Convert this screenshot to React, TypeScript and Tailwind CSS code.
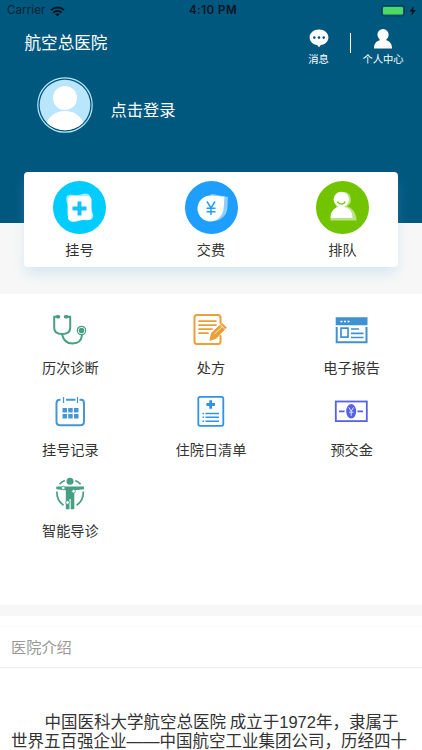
import type { ReactNode } from 'react';

type Item = { label: string; icon: ReactNode };

function StatusBar() {
  return (
    <div className="grid h-[22px] grid-cols-3 items-center pl-[7px] pr-[5px] font-['Inter','Liberation_Sans',sans-serif] text-[11.5px] leading-none text-[#04202f]">
      <div className="flex items-center gap-[5px]">
        <span className="tracking-[0.1px]">Carrier</span>
        <svg className="h-[11px] w-[15px]" viewBox="0 0 15 11" fill="none" stroke="#04151f" strokeWidth="2">
          <path d="M1 4.1a9.4 9.4 0 0 1 13 0" />
          <path d="M3.4 6.7a6 6 0 0 1 8.2 0" />
          <path d="M7.5 10.6 5.2 8.3a3.4 3.4 0 0 1 4.6 0z" fill="#04151f" stroke="none" />
        </svg>
      </div>
      <span className="pl-[2px] text-center font-semibold tracking-[0.5px] text-[#04151f]">4:10 PM</span>
      <div className="flex items-center justify-end">
        <svg className="h-[12px] w-[36px]" viewBox="0 0 36 12">
          <rect x="0.5" y="0.5" width="23" height="10.5" rx="2.5" fill="none" stroke="#063b55" />
          <rect x="2" y="2" width="20" height="7.5" rx="1" fill="#4cd964" />
          <path d="M25 4v3.6c1-.5 1-3.1 0-3.6z" fill="#063b55" />
          <path d="M32.8 1 28.6 6.5h2.6l-1 4.5 4.6-6h-2.7z" fill="#04151f" />
        </svg>
      </div>
    </div>
  );
}

function Header() {
  return (
    <header className="h-[222.5px] bg-[#00587f] text-white">
      <StatusBar />
      <div className="flex pl-[24.5px]">
        <h1 className="mt-[8px] text-[16.6px] leading-6 font-normal">航空总医院</h1>
        <div className="ml-auto flex pt-[7px] pr-[18px]">
          <div className="flex w-[41px] flex-col items-center">
            <svg className="h-[19px] w-[20px]" viewBox="0 0 20 19">
              <path d="M10 .4c5.3 0 9.4 3.4 9.4 7.9 0 4.2-3.3 7.1-7.5 7.8L10 18.2l-1.9-2.1C3.9 15.4.6 12.5.6 8.3.6 3.8 4.7.4 10 .4z" fill="#fff" />
              <circle cx="5.3" cy="8.6" r="1.3" fill="#00587f" />
              <circle cx="10" cy="8.6" r="1.3" fill="#00587f" />
              <circle cx="14.7" cy="8.6" r="1.3" fill="#00587f" />
            </svg>
            <span className="mt-[3px] text-[10.3px] leading-4 whitespace-nowrap">消息</span>
          </div>
          <div className="mx-[11px] mt-[4px] h-5 w-px bg-white" />
          <div className="flex w-[42px] flex-col items-center">
            <svg className="h-[20px] w-[18px]" viewBox="0 0 18 20" fill="#fff">
              <path d="M9 0a5.6 5.6 0 0 1 5.6 5.7c0 2-.9 3.7-2.3 4.7v.9c3.5.8 5.7 3.5 5.7 8.2H0c0-4.700 2.200-7.400 5.700-8.200v-.9a5.800 5.800 0 0 1-2.300-4.700A5.600 5.600 0 0 1 9 0z" />
            </svg>
            <span className="mt-[2px] text-[10.3px] leading-4 whitespace-nowrap">个人中心</span>
          </div>
        </div>
      </div>
      <div className="mt-[10px] flex pl-[37px]">
        <svg className="h-[56px] w-[56px]" viewBox="0 0 56 56">
          <clipPath id="face">
            <circle cx="28" cy="28" r="25.3" />
          </clipPath>
          <circle cx="28" cy="28" r="27.2" fill="none" stroke="#b9e4fa" strokeWidth="1.2" />
          <g clipPath="url(#face)">
            <rect width="56" height="56" fill="#b9e6fd" />
            <circle cx="28" cy="21" r="12" fill="#fff" />
            <ellipse cx="28" cy="51.5" rx="19.5" ry="17.5" fill="#fff" />
          </g>
        </svg>
        <span className="ml-[17.5px] mt-[20px] text-[16.3px] leading-6">点击登录</span>
      </div>
    </header>
  );
}

const shortcuts: Item[] = [
  {
    label: '挂号',
    icon: (
      <svg className="h-[53px] w-[53px]" viewBox="0 0 53 53">
        <circle cx="26.5" cy="26.5" r="26.5" fill="#00ccff" />
        <path d="M16 14c5-1 7 1 12-.5 4-1.5 8-1.5 9 2s-.5 6 1 11c1 5 3 7 2 10s-5 3-9 2.5-7 2.5-11 2-5-3-5.5-8 .5-7-.5-11-1.5-7 2-8z" fill="#a6ecff" />
        <path d="M18 15h16.5c2.5 0 4 1.5 4 4v16c0 2.5-1.5 4-4 4-4 0-6-.5-9 .5-4 1.3-10 1.5-10.5-2.500V22c0-4 0-7 3-7z" fill="#fff" />
        <path d="M26.5 20.5v14M19.5 27.5h14" stroke="#10c4f5" strokeWidth="4" />
      </svg>
    ),
  },
  {
    label: '交费',
    icon: (
      <svg className="h-[53px] w-[53px]" viewBox="0 0 53 53">
        <circle cx="26.5" cy="26.5" r="26.5" fill="#1e9fff" />
        <path d="M26 13c6 0 11 3 17 3-1 9 1 16-6 21-5 4-14 4-18-1z" fill="#8fcfff" />
        <path d="M25.5 14.5c5-.2 8 1.5 14 .8-.5 4-.3 7-.8 11.5-.8 8-6 13.7-13.2 13.7A13 13 0 0 1 25.5 14.5z" fill="#fff" />
        <path d="m22 20.5 4 6.3 4-6.3M26 26.8V34M21.5 27.2h9M21.5 30.7h9" fill="none" stroke="#1e9fff" strokeWidth="1.5" />
      </svg>
    ),
  },
  {
    label: '排队',
    icon: (
      <svg className="h-[53px] w-[53px]" viewBox="0 0 53 53">
        <circle cx="26.5" cy="26.5" r="26.5" fill="#72c400" />
        <path d="M28 11a7.5 7.5 0 0 1 2.5 14.3c6 1.5 10 7 10 14.2h-26V37z" fill="#bce383" />
        <circle cx="25.3" cy="18.5" r="7.7" fill="#fff" />
        <path d="M14.5 37c0-7 3.8-11.3 11-11.3S36.5 30 36.5 37z" fill="#fff" />
        <path d="M21.5 20.5c1.5 3.5 6.3 3.5 7.7 0" fill="none" stroke="#72c400" strokeWidth="1.3" />
      </svg>
    ),
  },
];

const services: Item[] = [
  {
    label: '历次诊断',
    icon: (
      <svg className="h-[36px] w-[36px]" viewBox="0 0 36 36" fill="none" stroke="#479f83" strokeWidth="2" strokeLinecap="round">
        <path d="M5 3.7H2.2V15c0 4 2.8 6 8 6s8-2 8-6V3.7H15" />
        <path d="M5.3 3.7h1.3M13.5 3.7h1.3" strokeWidth="3.4" />
        <path d="M10 21.2c1.5 6.5 5.5 9.3 10.5 9.3 6 0 9.2-3.5 9.5-8.7" />
        <circle cx="29.5" cy="17.5" r="4.2" strokeWidth="1.2" />
        <circle cx="29.5" cy="17.5" r="2.8" fill="#479f83" stroke="none" />
      </svg>
    ),
  },
  {
    label: '处方',
    icon: (
      <svg className="h-[36px] w-[36px]" viewBox="0 0 36 36" fill="none" stroke="#ea9f38" strokeWidth="2" strokeLinecap="round">
        <path d="M27.5 10V4.5C27.5 3 26.5 2 25 2H4C2.5 2 1.5 3 1.5 4.5v24C1.5 30 2.5 31 4 31h21c1.5 0 2.5-1 2.5-2.5V23" />
        <path d="M6 8.2h17M6 12.2h17M6 16.2h13M6 20.2h9" strokeWidth="1.7" />
        <path d="m17 27 1.6-7L29 10.5l4.3 4L23.5 25z" fill="#ea9f38" strokeWidth="1" strokeLinejoin="round" />
        <path d="m21.8 20.8 7.7-7.5M27.8 12.2l4 3.8" stroke="#fff" strokeWidth=".7" />
      </svg>
    ),
  },
  {
    label: '电子报告',
    icon: (
      <svg className="h-[36px] w-[36px]" viewBox="0 0 36 36" fill="none" stroke="#3f91d2" strokeWidth="2">
        <path d="M1.7 4.3h31.8v8H1.7z" fill="#3f91d2" stroke="none" />
        <path d="M2.7 14v15.3h29.8V14" />
        <path d="M7 15.2h7v9H7zM17 16h8M17 20.3h12.5M17 24.5h12.5" strokeWidth="1.7" />
        <path d="M6.5 8.5h2M10 8.5h2M13.5 8.5h2" stroke="#fff" strokeWidth="1.6" />
      </svg>
    ),
  },
  {
    label: '挂号记录',
    icon: (
      <svg className="h-[36px] w-[36px]" viewBox="0 0 36 36" fill="none" stroke="#4697d1" strokeWidth="2">
        <path d="M8.5 4.7H8C5.3 4.7 4.5 6 4.5 8v18.5c0 2.5 1 3.8 3.5 3.8h20.5c2.5 0 3.5-1.3 3.5-3.8V8c0-2.5-1-3.3-3-3.3h-1.5M14 4.7h9.5" />
        <path d="M11.5 2v6M25.5 2v6" strokeWidth="1.2" />
        <path d="M10.5 15.2H15M16.2 15.2h4.5M22 15.2h4.5M10.5 21.2H15M16.2 21.2h4.5M22 21.2h4.5" strokeWidth="4.4" />
      </svg>
    ),
  },
  {
    label: '住院日清单',
    icon: (
      <svg className="h-[36px] w-[36px]" viewBox="0 0 36 36" fill="none" stroke="#3192e8" strokeWidth="1.8">
        <rect x="5.3" y="1.8" width="25" height="29" rx="1.8" />
        <path d="M17.7 5.2v8.6M13.4 9.5H22" strokeWidth="2.8" />
        <path d="M9.5 18.5h1.6M12.5 18.5H26M9.5 22.3h1.6M12.5 22.3H26M9.5 26.2h1.6M12.5 26.2H26" strokeWidth="1.4" />
      </svg>
    ),
  },
  {
    label: '预交金',
    icon: (
      <svg className="h-[36px] w-[36px]" viewBox="0 0 36 36" fill="none" stroke="#5662e6" strokeWidth="1.8">
        <rect x="1.8" y="6.5" width="31" height="19.6" />
        <path d="M5 16.3h5.5M23.5 16.3H29" />
        <ellipse cx="17.2" cy="16.3" rx="5" ry="7.2" fill="#5662e6" stroke="none" />
        <path d="m14.8 12.4 2.4 3.8 2.4-3.8M17.2 16.2v4.6M15 17.2h4.4" stroke="#dfe1ff" strokeWidth="1" />
      </svg>
    ),
  },
  {
    label: '智能导诊',
    icon: (
      <svg className="h-[36px] w-[36px]" viewBox="0 0 36 36" fill="none" stroke="#479f83" strokeWidth="1.7">
        <path d="M12.8 4.5a14.5 14.5 0 0 0-5.3 3.8M23.3 4.5a14.5 14.5 0 0 1 5.3 3.8M4.9 15.5c-.3 6 2 10.500 6.600 13.700M31.300 15.500c.3 6-2 10.500-6.600 13.700" />
        <g fill="#479f83" stroke="none">
          <circle cx="18" cy="5.3" r="3.5" />
          <path d="M4.3 10.6H32v2.7l-9.7.9v19h-3.6V23h-1.2v10.2h-3.7v-19l-9.500-.9z" />
        </g>
        <g fill="#fff" stroke="#479f83" strokeWidth=".8">
          <circle cx="11.3" cy="12" r="1.8" />
          <circle cx="21.6" cy="15.2" r="1.8" />
          <circle cx="15.5" cy="26.5" r="1.8" />
        </g>
      </svg>
    ),
  },
];

export default function App() {
  return (
    <div className="h-[750px] w-[422px] overflow-hidden bg-white font-['Noto_Sans_CJK_SC',sans-serif] text-[#333]">
      <Header />

      {/* Quick actions, lifted over the header */}
      <div className="h-[71.5px] bg-[#f7f7f7] px-6">
        <div className="relative -top-[51px] flex h-[95.5px] justify-between rounded-[4px] bg-white px-[29px] pt-[9.5px] shadow-[0_8px_14px_-2px_rgba(120,185,225,0.28)]">
          {shortcuts.map((s) => (
            <div key={s.label} className="flex flex-col items-center">
              {s.icon}
              <span className="mt-[5px] text-[14.2px] leading-5">{s.label}</span>
            </div>
          ))}
        </div>
      </div>

      <div className="grid h-[311px] auto-rows-[81.5px] grid-cols-3 pt-[19px]">
        {services.map((s) => (
          <div key={s.label} className="flex flex-col items-center">
            {s.icon}
            <span className="mt-[8px] text-[14.2px] leading-5">{s.label}</span>
          </div>
        ))}
      </div>

      <div className="h-[11px] bg-[#f7f7f7]" />

      <section className="pt-[10px]">
        <h2 className="flex h-[42px] items-center border-t border-b border-t-[#fafafa] border-b-[#ededed] px-[11px] pb-[2px] text-[15.2px] font-normal text-[#999]">
          医院介绍
        </h2>
        <p className="pt-[43.5px] pl-[11px] text-[16.5px] leading-[19.5px] whitespace-nowrap">
          <span className="inline-block w-[33.5px]" />
          中国医科大学航空总医院 成立于
          <span className="font-['Liberation_Sans',sans-serif] leading-none">1972</span>年，隶属于
          <br />
          世界五百强企业
          <span className="font-['Liberation_Sans',sans-serif] leading-none">——</span>中国航空工业集团公司，历经四十
        </p>
      </section>
    </div>
  );
}
